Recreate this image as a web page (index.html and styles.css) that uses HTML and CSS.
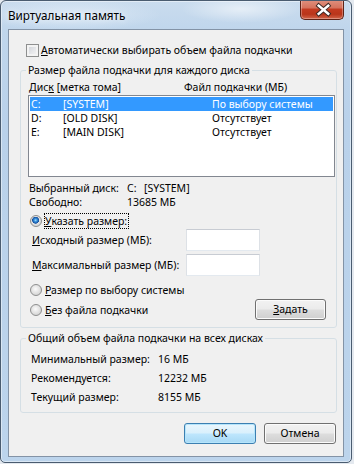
FILE: index.html
```html
<!DOCTYPE html>
<html lang="ru">
<head>
<meta charset="utf-8">
<title>Виртуальная память</title>
<link rel="stylesheet" href="styles.css">
</head>
<body>
<div class="window">
  <div class="titlebar">
    <span class="title">Виртуальная память</span>
    <button class="close" aria-label="Закрыть">
      <svg width="44" height="19" viewBox="0 0 44 19">
        <path d="M18.5 5.5 L28.5 14 M28.5 5.5 L18.5 14" stroke="#3f2a26" stroke-width="4.6" stroke-linecap="square" fill="none"/>
        <path d="M18.5 5.5 L28.5 14 M28.5 5.5 L18.5 14" stroke="#ffffff" stroke-width="2.6" stroke-linecap="square" fill="none"/>
      </svg>
    </button>
  </div>
  <div class="client">
    <div class="auto-row"><span class="checkbox"></span><span><u>А</u>втоматически выбирать объем файла подкачки</span></div>

    <fieldset class="group group-disks">
      <legend>Размер файла подкачки для каждого диска</legend>
      <div class="list-head"><span class="lh-disk">Дис<u>к</u> [метка тома]</span><span>Файл подкачки (МБ)</span></div>
      <div class="listbox">
        <div class="lrow selected"><span class="c-letter">C:</span><span class="c-label">[SYSTEM]</span><span>По выбору системы</span></div>
        <div class="lrow"><span class="c-letter">D:</span><span class="c-label">[OLD DISK]</span><span>Отсутствует</span></div>
        <div class="lrow"><span class="c-letter">E:</span><span class="c-label">[MAIN DISK]</span><span>Отсутствует</span></div>
      </div>
      <div class="info-row first"><span class="info-key">Выбранный диск:</span><span class="info-drive">C:</span><span>[SYSTEM]</span></div>
      <div class="info-row"><span class="info-key">Свободно:</span><span class="info-val">13685 МБ</span></div>

      <div class="radio-row first"><span class="radio checked"></span><span class="focus"><u>У</u>казать размер:</span></div>
      <div class="size-row"><span class="size-label"><u>И</u>сходный размер (МБ):</span><span class="textbox"></span></div>
      <div class="size-row second"><span class="size-label"><u>М</u>аксимальный размер (МБ):</span><span class="textbox"></span></div>
      <div class="radio-row sys"><span class="radio"></span><span><u>Р</u>азмер по выбору системы</span></div>
      <div class="radio-row last"><span class="radio"></span><span><u>Б</u>ез файла подкачки</span><button class="btn set"><u>З</u>адать</button></div>
    </fieldset>

    <fieldset class="group group-total">
      <legend>Общий объем файла подкачки на всех дисках</legend>
      <div class="total-row first"><span class="total-key">Минимальный размер:</span><span>16 МБ</span></div>
      <div class="total-row"><span class="total-key">Рекомендуется:</span><span>12232 МБ</span></div>
      <div class="total-row"><span class="total-key">Текущий размер:</span><span>8155 МБ</span></div>
    </fieldset>

    <div class="actions">
      <button class="btn default">OK</button>
      <button class="btn">Отмена</button>
    </div>
  </div>
</div>
</body>
</html>
```

FILE: styles.css
```css
* { box-sizing: border-box; }

html, body {
  margin: 0;
  padding: 0;
}

body {
  width: 354px;
  height: 464px;
  overflow: hidden;
  background: #e4e9ef;
  font-family: "Segoe UI", "Noto Sans", sans-serif;
  font-size: 10.5px;
  color: #000;
  white-space: nowrap;
}

u { text-underline-offset: 1px; }

.window {
  width: 352px;
  height: 463px;
  border: 1px solid #4a5c70;
  border-radius: 6px 6px 5px 5px;
  overflow: hidden;
  display: flex;
  flex-direction: column;
  background:
    radial-gradient(ellipse 60px 14px at 240px 8px, rgba(255,255,255,0.55), rgba(255,255,255,0) 100%),
    radial-gradient(ellipse 90px 16px at 70px 14px, rgba(235,244,252,0.6), rgba(255,255,255,0) 100%),
    linear-gradient(180deg, #cadcee 0px, #c0d6ec 28px, #b9d1ea 120px, #bcd4ec 100%);
  box-shadow: inset 0 0 0 1px rgba(255,255,255,0.45);
}

.titlebar {
  height: 28px;
  flex: none;
  display: flex;
  align-items: flex-start;
  padding: 0 7px;
}

.title {
  align-self: center;
  font-size: 11.7px;
  line-height: 16px;
  color: #000;
  text-shadow: 0 0 6px rgba(255,255,255,0.9);
}

.close {
  margin-left: auto;
  margin-top: -1px;
  width: 44px;
  height: 20px;
  padding: 0;
  border: 1px solid #5e2216;
  border-top: none;
  border-radius: 0 0 5px 5px;
  background: linear-gradient(180deg, #e0917f 0%, #d6735d 40%, #c33a20 50%, #b9351a 75%, #d2654a 100%);
  box-shadow: inset 0 0 0 1px rgba(255,255,255,0.3);
  display: flex;
  align-items: center;
  justify-content: center;
}

.close svg { display: block; }

.client {
  flex: none;
  margin: 0 7px;
  height: 428px;
  border: 1px solid #8393a6;
  background: #f0f0f0;
  padding-top: 12px;
}

.auto-row {
  display: flex;
  align-items: center;
  height: 16px;
  margin-left: 17px;
  gap: 2px;
}

.checkbox {
  width: 13px;
  height: 13px;
  border: 1px solid #8e8f8f;
  background: linear-gradient(135deg, #c9cdd3 0%, #e6e7ea 55%, #f6f6f6 100%);
  box-shadow: inset 0 0 0 2px #f3f3f3;
  flex: none;
}

.group {
  margin: 4px 6px 0 11px;
  padding: 0;
  min-width: 0;
  border: 1px solid #d5dfe5;
  border-radius: 3px;
}

.group legend {
  margin-left: 5px;
  padding: 0 2px;
  line-height: 16px;
}

.group-disks { padding-bottom: 7px; }

.list-head {
  display: flex;
  line-height: 16px;
  margin-top: 1px;
  padding-left: 8px;
}

.lh-disk { width: 155px; flex: none; }

.listbox {
  margin: 0 1px 0 7px;
  height: 82px;
  border: 1px solid #828790;
  background: #fff;
  padding: 1px;
}

.lrow {
  display: flex;
  height: 14px;
  line-height: 14px;
  padding-left: 1px;
}

.lrow.selected {
  background: #3399ff;
  color: #fff;
}

.c-letter { width: 32px; flex: none; }
.c-label { width: 149px; flex: none; }

.info-row {
  display: flex;
  height: 14px;
  line-height: 14px;
  padding-left: 8px;
}

.info-row.first { margin-top: 4px; }

.info-key { width: 98px; flex: none; }
.info-drive { width: 17px; flex: none; }

.radio-row {
  display: flex;
  align-items: center;
  height: 16px;
  padding-left: 9px;
}

.radio-row.first { margin-top: 4px; }
.radio-row.sys { margin-top: 6px; }
.radio-row.last {
  height: 21px;
  margin-top: 1px;
}

.radio {
  width: 12px;
  height: 12px;
  flex: none;
  border-radius: 50%;
  margin-right: 3px;
  border: 1px solid #8e8f8f;
  background: radial-gradient(circle at 45% 40%, #fbfbfb 0, #e4e4e4 45%, #c9c9c9 100%);
}

.radio.checked {
  margin-right: 2px;
  background:
    radial-gradient(circle at 46% 42%, #a6e2ff 0, #3b95de 1.4px, #154f9e 3.2px, rgba(21,79,158,0) 3.7px),
    radial-gradient(circle at 45% 40%, #fbfbfb 0, #e4e4e4 45%, #c9c9c9 100%);
}

.focus {
  border: 1px dotted #000;
  line-height: 14px;
  padding-right: 1px;
}

.size-row {
  display: flex;
  align-items: center;
  height: 22px;
  padding-left: 11px;
}

.size-row.second { margin-top: 3px; }

.size-label { width: 154px; flex: none; }

.textbox {
  width: 74px;
  height: 22px;
  flex: none;
  background: #fff;
  border: 1px solid;
  border-color: #c8ccd3 #dde1e6 #e3e9ef #dde1e6;
}

.btn {
  font: inherit;
  color: #000;
  height: 21px;
  padding: 0;
  line-height: 19px;
  border: 1px solid #707070;
  border-radius: 3px;
  background: linear-gradient(180deg, #f2f2f2 0%, #ebebeb 48%, #dddddd 52%, #cfcfcf 100%);
  box-shadow: inset 0 0 0 1px #fbfbfb;
}

.btn.set {
  margin-left: auto;
  margin-right: 10px;
  width: 71px;
}

.btn.default {
  border-color: #3c7fb1;
  background: linear-gradient(180deg, #eaf6fd 0%, #d9f0fc 48%, #bee6fd 52%, #a7d9f5 100%);
  box-shadow: inset 0 0 0 1px #b6e5fb;
}

.group-total {
  margin-top: 2px;
  padding-bottom: 5px;
}

.total-row {
  display: flex;
  height: 19px;
  line-height: 19px;
  padding-left: 10px;
}

.total-row.first { margin-top: 4px; }

.total-key { width: 127px; flex: none; }

.actions {
  display: flex;
  justify-content: flex-end;
  gap: 8px;
  margin-top: 10px;
  padding-right: 7px;
}

.actions .btn { width: 72px; }
```
